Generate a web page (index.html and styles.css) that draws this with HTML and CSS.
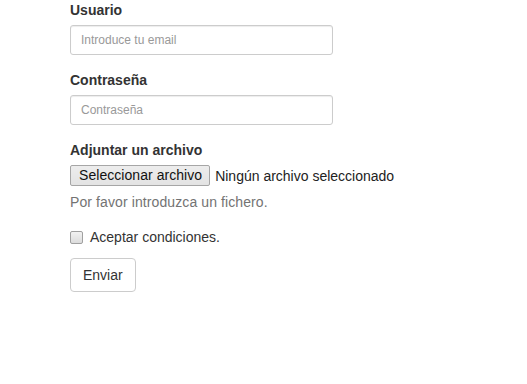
FILE: index.html
```html
<!DOCTYPE html>
<html lang="es">
<head>
<meta charset="utf-8">
<title>Formulario</title>
<link rel="stylesheet" href="styles.css">
</head>
<body>
<form class="form">
  <div class="form-group">
    <label class="label" for="email">Usuario</label>
    <input class="form-control" id="email" type="email" placeholder="Introduce tu email">
  </div>
  <div class="form-group">
    <label class="label" for="pass">Contraseña</label>
    <input class="form-control" id="pass" type="password" placeholder="Contraseña">
  </div>
  <div class="form-group">
    <label class="label">Adjuntar un archivo</label>
    <div class="file">
      <span class="file-btn">Seleccionar archivo</span>
      <span class="file-name">Ningún archivo seleccionado</span>
    </div>
    <p class="help-block">Por favor introduzca un fichero.</p>
  </div>
  <div class="checkbox">
    <label class="check-label"><span class="check-box"></span>Aceptar condiciones.</label>
  </div>
  <button type="button" class="btn">Enviar</button>
</form>
</body>
</html>
```
FILE: styles.css
```css
* { box-sizing: border-box; }
html, body { margin: 0; padding: 0; background: #fff; }
body {
  font-family: "Liberation Sans", Arial, Helvetica, sans-serif;
  font-size: 14px;
  line-height: 20px;
  color: #333;
}
.form { width: 263px; margin-left: 70px; }
.form-group { margin-bottom: 15px; }
.label {
  display: block;
  font-weight: bold;
  margin-bottom: 5px;
  line-height: 20px;
}
.form-control {
  display: block;
  width: 263px;
  height: 30px;
  padding: 5px 10px;
  font-family: inherit;
  font-size: 12px;
  line-height: 18px;
  color: #555;
  background: #fff;
  border: 1px solid #ccc;
  border-radius: 3px;
  box-shadow: inset 0 1px 1px rgba(0,0,0,.075);
  outline: none;
}
.form-control::placeholder { color: #999; }
.file { display: flex; align-items: center; white-space: nowrap; height: 21px; }
.file-btn {
  display: inline-block;
  height: 21px;
  line-height: 19px;
  padding: 0 7px 0 8px;
  background: linear-gradient(#ededed, #e3e3e3);
  border: 1px solid #a6a6a6;
  border-radius: 2px;
  color: #111;
  font-size: 14px;
  letter-spacing: 0.05px;
}
.file-name { margin-left: 5px; color: #222; }
.help-block { margin: 6px 0 10px; color: #737373; letter-spacing: 0.1px; }
.checkbox { margin: 10px 0 11px; min-height: 20px; }
.check-label { display: flex; align-items: center; cursor: pointer; }
.check-box {
  width: 13px;
  height: 13px;
  border: 1px solid #a0a0a0;
  border-radius: 2px;
  background: linear-gradient(#f2f2f2, #dcdcdc);
  margin-right: 7px;
}
.btn {
  display: inline-block;
  height: 34px;
  padding: 6px 12px;
  font-family: inherit;
  font-size: 14px;
  line-height: 20px;
  color: #333;
  background: #fff;
  border: 1px solid #ccc;
  border-radius: 4px;
}
```
